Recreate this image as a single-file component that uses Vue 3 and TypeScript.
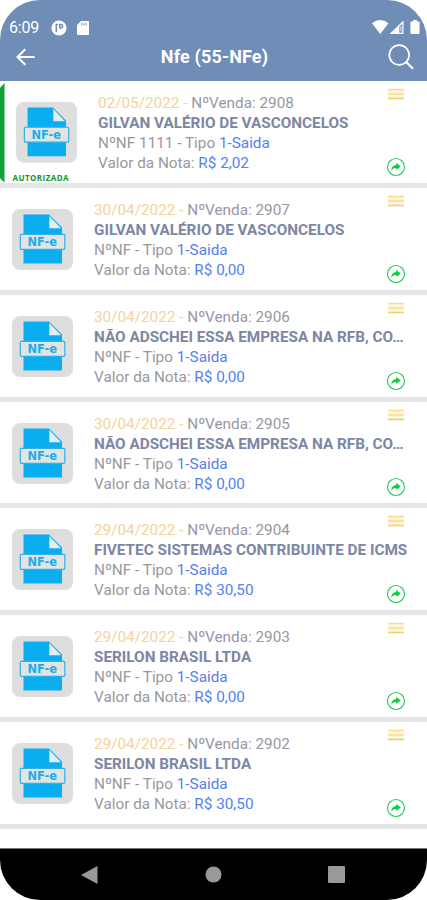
<script setup lang="ts">
interface Invoice {
  date: string
  sale: string
  customer: string
  number: string
  amount: string
  authorized?: boolean
}

const invoices: Invoice[] = [
  { date: '02/05/2022', sale: '2908', customer: 'GILVAN VALÉRIO DE VASCONCELOS', number: ' 1111', amount: '2,02', authorized: true },
  { date: '30/04/2022', sale: '2907', customer: 'GILVAN VALÉRIO DE VASCONCELOS', number: '', amount: '0,00' },
  { date: '30/04/2022', sale: '2906', customer: 'NÃO ADSCHEI ESSA EMPRESA NA RFB, CO…', number: '', amount: '0,00' },
  { date: '30/04/2022', sale: '2905', customer: 'NÃO ADSCHEI ESSA EMPRESA NA RFB, CO…', number: '', amount: '0,00' },
  { date: '29/04/2022', sale: '2904', customer: 'FIVETEC SISTEMAS CONTRIBUINTE DE ICMS', number: '', amount: '30,50' },
  { date: '29/04/2022', sale: '2903', customer: 'SERILON BRASIL LTDA', number: '', amount: '0,00' },
  { date: '29/04/2022', sale: '2902', customer: 'SERILON BRASIL LTDA', number: '', amount: '30,50' },
]
</script>

<template>
  <div class="phone">
    <header class="top">
      <div class="status">
        <span class="clock">6:09</span>
        <svg class="st-p" width="16" height="16" viewBox="0 0 16 16">
          <circle cx="8" cy="8" r="7.6" fill="#fff" />
          <path d="M5.300 12.200V4.200M4.500 4.500H7.200M8.800 3.800V8.300M8.800 4.500h1.200a1.700 1.700 0 0 1 0 3.400H8.800" fill="none" stroke="#708db7" stroke-width="1.500" />
        </svg>
        <svg class="st-sd" width="12" height="14" viewBox="0 0 12 14">
          <path d="M4 0h7a1 1 0 0 1 1 1v12a1 1 0 0 1-1 1H1a1 1 0 0 1-1-1V4z" fill="#fff" />
          <path d="M4.8 1.8v2.6M7 1.8v2.6M9.2 1.8v2.6" stroke="#9aaecb" stroke-width="1.2" />
        </svg>
        <svg class="st-net" width="49" height="15" viewBox="0 0 49 15">
          <path d="M0 3.3Q8.2-3.1 16.4 3.3L8.2 14z" fill="#fff" />
          <path d="M17.5 14L31.5 .6V14z" fill="#fff" />
          <path d="M27.3 6.6L30.3 3.7V12.8H27.3z" fill="#708db7" />
          <path d="M28.3 6.2h1.3v5.3h-1.3z" fill="#cbd6e6" />
          <path d="M41.200 0h3.600v1.600h1.900a.9.9 0 0 1 .9.9V13.100a.9.9 0 0 1-.9.9h-7.400a.9.9 0 0 1-.9-.9V2.500a.9.9 0 0 1 .9-.9h1.900z" fill="#fff" />
        </svg>
      </div>
      <div class="bar">
        <svg width="20" height="18" viewBox="0 0 20 18">
          <path d="M18.500 9H2M9.300 1.200L1.500 9l7.800 7.800" fill="none" stroke="#fff" stroke-width="2" />
        </svg>
        <h1>Nfe (55-NFe)</h1>
        <svg width="26" height="26" viewBox="0 0 26 26">
          <circle cx="11.200" cy="11" r="9.900" fill="none" stroke="#fff" stroke-width="1.700" />
          <path d="M18.200 18L25 24.800" stroke="#fff" stroke-width="2" />
        </svg>
      </div>
    </header>

    <main class="list">
      <article v-for="inv in invoices" :key="inv.sale" class="row" :class="{ authorized: inv.authorized }">
        <div class="thumb">
          <svg width="61" height="61" viewBox="0 0 61 61">
            <rect width="61" height="61" rx="8" fill="#dedede" />
            <path d="M11.500 5.500H37L50 18.500V54.500H11.500z" fill="#0aaef0" />
            <path d="M37.300 7V19.200H49z" fill="#e6eef2" />
            <rect x="8.300" y="25.300" width="44.500" height="15" rx="1" fill="#e3e3e3" stroke="#2fb0e6" stroke-width="1.200" />
            <text x="30.300" y="37.200" text-anchor="middle" textLength="29.500" lengthAdjust="spacingAndGlyphs">NF-e</text>
          </svg>
          <span v-if="inv.authorized" class="tag">AUTORIZADA</span>
        </div>
        <div class="info">
          <p class="sale"><span class="date">{{ inv.date }} - </span>NºVenda: {{ inv.sale }}</p>
          <p class="customer">{{ inv.customer }}</p>
          <p>NºNF{{ inv.number }} - Tipo <span class="blue">1-Saida</span></p>
          <p>Valor da Nota: <span class="blue">R$ {{ inv.amount }}</span></p>
        </div>
        <div class="actions">
          <svg width="16" height="12" viewBox="0 0 16 12">
            <rect y="1" width="16" height="10" fill="#fdf6df" />
            <path d="M0 1.500H16M0 6H16" stroke="#f7dd90" stroke-width="1.400" />
            <path d="M0 10.500H16" stroke="#efd066" stroke-width="1.600" />
          </svg>
          <svg width="20" height="20" viewBox="0 0 20 20">
            <circle cx="10" cy="10" r="8.500" fill="none" stroke="#2ccd5e" stroke-width="1.200" />
            <path d="M5.300 13.400C5.600 9.800 7.300 8.200 10.200 8V5.700L14.800 9.500 10.200 13.100V10.900C8 10.900 6.600 11.700 5.300 13.400z" fill="#12cb4b" />
          </svg>
        </div>
      </article>
    </main>

    <nav class="nav">
      <svg width="17" height="20" viewBox="0 0 17 20"><path d="M0 10L16.500 1V19z" fill="#999" /></svg>
      <svg width="17" height="17" viewBox="0 0 17 17"><circle cx="8.500" cy="8.500" r="8" fill="#999" /></svg>
      <svg width="17" height="17" viewBox="0 0 17 17"><rect width="17" height="17" rx="1" fill="#999" /></svg>
    </nav>
  </div>
</template>

<style>
body {
  background: #fff;
}
</style>

<style scoped>
.phone {
  display: flex;
  flex-direction: column;
  width: 427px;
  height: 900px;
  overflow: hidden;
  border-radius: 40px;
  background: #fff;
  font-family: Roboto, sans-serif;
}
.top {
  flex: none;
  box-sizing: border-box;
  height: 81px;
  padding-top: 18px;
  background: #708db7;
  color: #fff;
}
.status {
  display: flex;
  align-items: center;
  height: 19px;
  padding: 0 4px 0 9px;
}
.clock {
  width: 42px;
  font-size: 16px;
  line-height: 19px;
  letter-spacing: -0.200px;
}
.st-sd {
  margin-left: 10px;
}
.st-net {
  margin-left: auto;
  margin-right: 2.500px;
}
.bar {
  display: flex;
  align-items: center;
  justify-content: space-between;
  height: 40px;
  padding: 0 13px 0 16px;
}
h1 {
  margin: -2px 0 0;
  font-size: 18px;
  font-weight: 700;
  letter-spacing: 0.150px;
  padding-left: 5px;
}
.list {
  flex: 1;
  min-height: 0;
}
.row {
  display: flex;
  box-sizing: border-box;
  height: 106.850px;
  padding: 0 0 0 11.500px;
  border-bottom: 5.400px solid #e5e5e5;
  position: relative;
}
.row.authorized {
  padding-left: 16px;
}
.row.authorized::before {
  content: '';
  position: absolute;
  left: 0;
  top: 2px;
  bottom: 0;
  width: 4.500px;
  background: #14a038;
  clip-path: polygon(0 5px, 100% 0, 100% 100%, 0 95px);
}
.thumb {
  display: flex;
  flex-direction: column;
  flex: none;
  width: 82.500px;
  padding-top: 21px;
}
.row.authorized .thumb {
  width: 82px;
}
.thumb text {
  font: 700 13px 'DejaVu Sans', sans-serif;
  fill: #18aeea;
}
.tag {
  margin: 10px 0 0 -3.500px;
  color: #149430;
  font: 700 8px/10px 'Open Sans', sans-serif;
  letter-spacing: 0.450px;
}
.info {
  flex: none;
  width: 322px;
  padding-top: 12px;
}
.info p {
  margin: 0;
  color: #98989c;
  font-size: 15.300px;
  line-height: 20px;
  white-space: pre;
}
.info .sale {
  color: #9698a6;
}
.info .date {
  color: #f3d39a;
}
.info .customer {
  color: #7d86a3;
  font-weight: 700;
}
.info .blue {
  color: #5580f2;
}
.actions {
  position: absolute;
  right: 21.500px;
  top: 7px;
  bottom: 6px;
  display: flex;
  flex-direction: column;
  align-items: center;
  justify-content: space-between;
}
.nav {
  flex: none;
  box-sizing: border-box;
  display: flex;
  align-items: center;
  justify-content: space-between;
  height: 52px;
  padding: 0 82px 0 81px;
  border-top: 1px solid #777;
  background: #000;
}
</style>
